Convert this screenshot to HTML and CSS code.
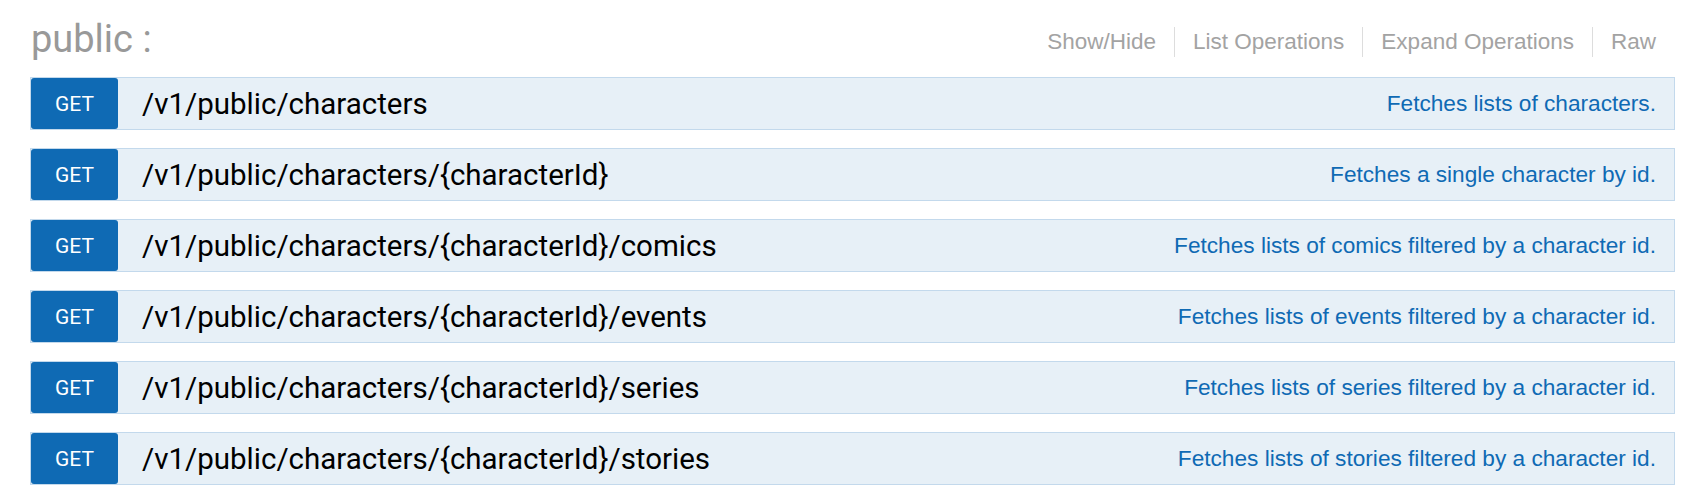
FILE: index.html
```html
<!DOCTYPE html>
<html>
<head>
<meta charset="utf-8">
<link rel="stylesheet" href="styles.css">
</head>
<body>
<div class="page">
  <div class="resource-header">
    <h2 class="resource-title">public :</h2>
    <ul class="options">
      <li>Show/Hide</li>
      <li>List Operations</li>
      <li>Expand Operations</li>
      <li>Raw</li>
    </ul>
  </div>
  <ul class="operations">
    <li class="operation">
      <span class="method">GET</span>
      <span class="path">/v1/public/characters</span>
      <span class="summary">Fetches lists of characters.</span>
    </li>
    <li class="operation">
      <span class="method">GET</span>
      <span class="path">/v1/public/characters/{characterId}</span>
      <span class="summary">Fetches a single character by id.</span>
    </li>
    <li class="operation">
      <span class="method">GET</span>
      <span class="path">/v1/public/characters/{characterId}/comics</span>
      <span class="summary">Fetches lists of comics filtered by a character id.</span>
    </li>
    <li class="operation">
      <span class="method">GET</span>
      <span class="path">/v1/public/characters/{characterId}/events</span>
      <span class="summary">Fetches lists of events filtered by a character id.</span>
    </li>
    <li class="operation">
      <span class="method">GET</span>
      <span class="path">/v1/public/characters/{characterId}/series</span>
      <span class="summary">Fetches lists of series filtered by a character id.</span>
    </li>
    <li class="operation">
      <span class="method">GET</span>
      <span class="path">/v1/public/characters/{characterId}/stories</span>
      <span class="summary">Fetches lists of stories filtered by a character id.</span>
    </li>
  </ul>
</div>
</body>
</html>
```
FILE: styles.css
```css
html, body {
  margin: 0;
  padding: 0;
  background: #ffffff;
}

.page {
  padding: 16px 10px 0 30px;
}

.resource-header {
  display: flex;
  justify-content: space-between;
  align-items: flex-start;
  height: 46px;
  margin-bottom: 15px;
}

.resource-title {
  margin: 0 0 0 1px;
  font-family: Roboto, "Liberation Sans", sans-serif;
  font-weight: 400;
  font-size: 38px;
  line-height: 46px;
  color: #999999;
}

.options {
  list-style: none;
  margin: 11px 19px 0 0;
  padding: 0;
  display: flex;
}

.options li {
  font-family: "Liberation Sans", Arial, sans-serif;
  font-size: 22.5px;
  line-height: 30px;
  color: #a3a3a3;
  padding: 0 18px;
  border-right: 1px solid #dddddd;
}

.options li:last-child {
  padding-right: 0;
  border-right: none;
}

.operations {
  list-style: none;
  margin: 0;
  padding: 0;
  display: flex;
  flex-direction: column;
  gap: 18px;
}

.operation {
  display: flex;
  align-items: center;
  height: 51px;
  background: #e7f0f7;
  border: 1px solid #c3d9ec;
}

.method {
  flex: none;
  width: 87px;
  height: 51px;
  display: flex;
  align-items: center;
  justify-content: center;
  background: #0f6ab4;
  color: #ffffff;
  border-radius: 3px;
  font-family: Roboto, "Liberation Sans", sans-serif;
  font-size: 21px;
}

.path {
  margin-left: 24px;
  font-family: Roboto, "Liberation Sans", sans-serif;
  font-size: 29.5px;
  color: #000000;
  white-space: nowrap;
}

.summary {
  margin-left: auto;
  padding-right: 18px;
  font-family: "Liberation Sans", Arial, sans-serif;
  font-size: 22.65px;
  color: #0f6ab4;
  white-space: nowrap;
}
```
